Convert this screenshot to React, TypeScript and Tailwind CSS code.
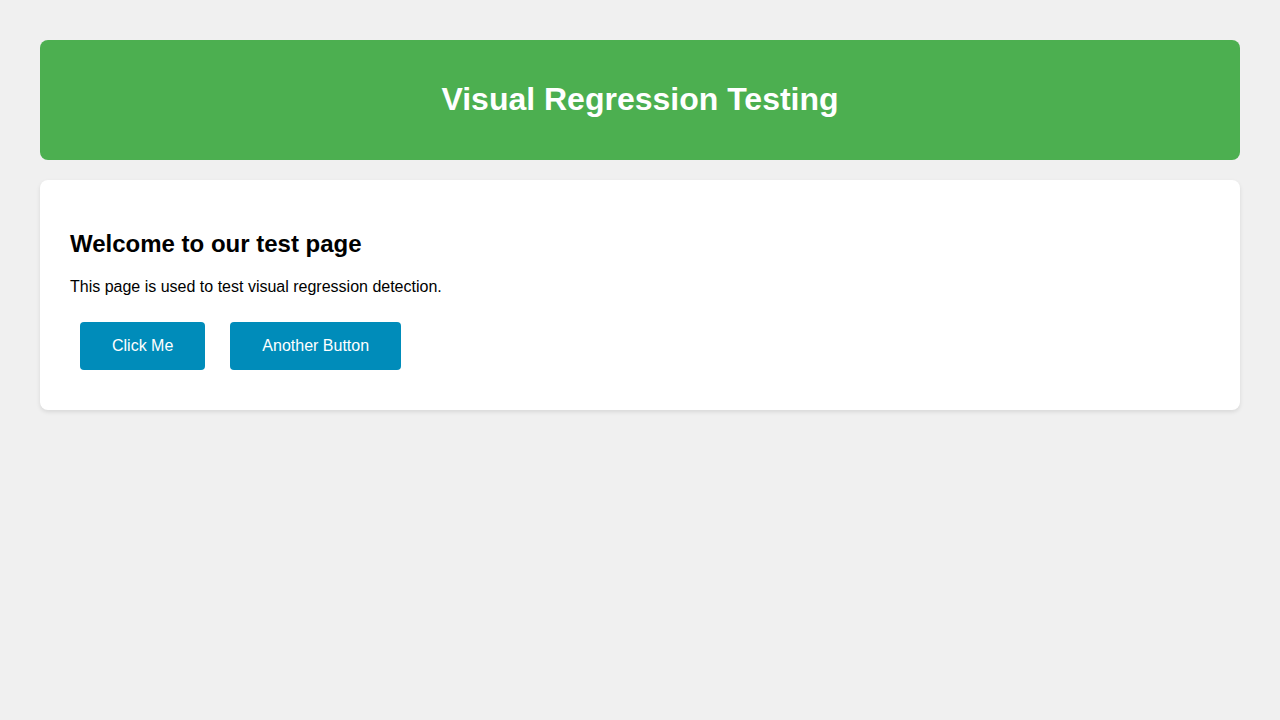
import React from 'react';

export default function App() {
  return (
    <div className="min-h-screen bg-[#f0f0f0] p-[40px] font-['Liberation_Sans',Arial,sans-serif] text-black">
      {/* Header */}
      <header className="bg-[#4caf50] rounded-[8px] py-[20px] text-center text-white">
        <h1 className="my-[21.44px] text-[32px] leading-[37px] font-bold">Visual Regression Testing</h1>
      </header>

      {/* Content card */}
      <main className="mt-[20px] bg-white rounded-[8px] p-[30px] shadow-[0_2px_4px_rgba(0,0,0,0.1)]">
        <h2 className="mt-[20px] mb-[20px] text-[24px] leading-[28px] font-bold">Welcome to our test page</h2>
        <p className="mb-[16px] text-[16px] leading-[18px]">This page is used to test visual regression detection.</p>
        <div className="flex gap-[25px] p-[10px]">
          <button className="bg-[#008cba] text-white text-[16px] leading-[18px] px-[32px] py-[15px] rounded-[4px]">
            Click Me
          </button>
          <button className="bg-[#008cba] text-white text-[16px] leading-[18px] px-[32px] py-[15px] rounded-[4px]">
            Another Button
          </button>
        </div>
      </main>
    </div>
  );
}
